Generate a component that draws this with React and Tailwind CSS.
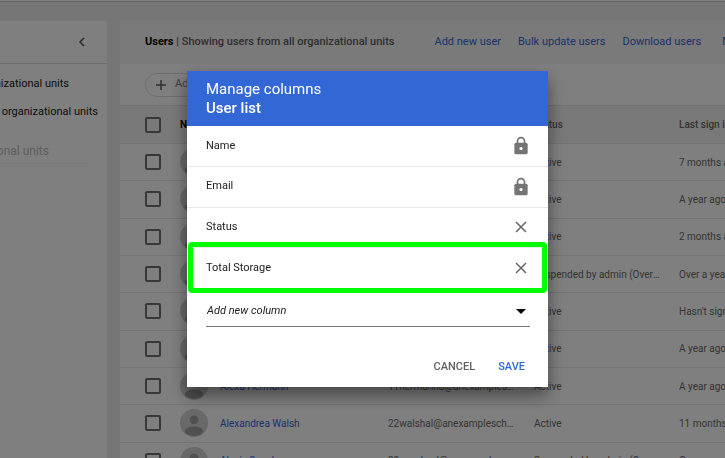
import React from 'react';

const users = [
  { status: 'Active', lastSignIn: '7 months ago' },
  { status: 'Active', lastSignIn: 'A year ago' },
  { status: 'Active', lastSignIn: '2 months ago' },
  { status: 'Suspended by admin (Over quota)', lastSignIn: 'Over a year ago' },
  { status: 'Active', lastSignIn: "Hasn't signed in" },
  { status: 'Active', lastSignIn: 'A year ago' },
  { name: 'Alexa Hermann', email: '11hermanna@anexampleschool.com', status: 'Active', lastSignIn: 'A year ago' },
  { name: 'Alexandrea Walsh', email: '22walshal@anexampleschool.com', status: 'Active', lastSignIn: '11 months ago' },
  { name: 'Alexis Spenks', email: '22spenksal@anexampleschool.com', status: 'Suspended by admin (Over quota)', lastSignIn: 'Over a year ago' },
];

const columns = [
  { label: 'Name', locked: true },
  { label: 'Email', locked: true },
  { label: 'Status' },
  { label: 'Total Storage', highlighted: true },
];

function Avatar() {
  return (
    <svg viewBox="0 0 28 28" className="size-7 shrink-0" aria-hidden="true">
      <circle cx="14" cy="14" r="14" fill="#d2d2d2" />
      <circle cx="14" cy="10.8" r="4.4" fill="#a0a0a0" />
      <ellipse cx="14" cy="22.2" rx="9.2" ry="4.8" fill="#a0a0a0" />
    </svg>
  );
}

function LockIcon() {
  return (
    <svg viewBox="0 0 24 24" className="-mr-px size-5" aria-hidden="true">
      <path d="M7.8 9V6.2a4.2 4.2 0 0 1 8.4 0V9" fill="none" stroke="#757575" strokeWidth="2" />
      <rect x="4" y="8" width="16" height="14" rx="2" fill="#757575" />
      <circle cx="12" cy="15" r="1.9" fill="#fff" />
    </svg>
  );
}

function CloseIcon() {
  return (
    <svg viewBox="0 0 18 18" className="size-[18px]" fill="none" stroke="#666" strokeWidth="1.5" aria-hidden="true">
      <path d="M4 4l10 10M14 4L4 14" />
    </svg>
  );
}

function Checkbox({ label }) {
  return (
    <input
      type="checkbox"
      aria-label={label}
      className="block size-4 appearance-none rounded-xs border-2 border-[#707070]"
    />
  );
}

function Sidebar() {
  return (
    <aside className="w-[107px] shrink-0 overflow-hidden rounded-tr-xs bg-white text-[11px] leading-4 whitespace-nowrap text-[#202020]">
      <div className="flex h-[43px] items-center justify-end border-b border-[#dcdcdc] pr-5">
        <button aria-label="Collapse" className="size-[10px]">
          <svg viewBox="0 0 10 10" className="size-[10px]" fill="none" stroke="#505050" strokeWidth="1.5">
            <path d="M7 1L3 5l4 4" />
          </svg>
        </button>
      </div>
      <ul className="flex flex-col gap-3 pt-3">
        <li className="flex justify-end pr-[38px]">Users from all organizational units</li>
        <li className="flex justify-end pr-[9px]">Users from selected organizational units</li>
      </ul>
      <div className="mt-5 mr-5 flex h-6 items-center justify-end border-b border-[#f0f0f0] pr-[38px] pb-0.5 text-xs text-[#bdbdbd]">
        Search for organizational units
      </div>
    </aside>
  );
}

function UserTable() {
  return (
    <table className="h-[375px] w-[709px] table-fixed border-t border-[#e4e4e4] text-left text-[10px] text-[#6a6a6a]">
      <colgroup>
        <col className="w-[60px]" />
        <col className="w-[208px]" />
        <col className="w-[146px]" />
        <col className="w-[145px]" />
        <col className="w-[150px]" />
      </colgroup>
      <thead>
        <tr className="h-[38px] border-b border-[#e4e4e4] bg-[#f2f2f2]">
          <th className="pl-[25px]"><Checkbox label="Select all users" /></th>
          <th className="font-bold text-black">Name</th>
          <th className="font-medium">Email</th>
          <th className="font-medium">Status</th>
          <th className="font-medium">Last sign in</th>
        </tr>
      </thead>
      <tbody>
        {users.map((user, index) => (
          <tr key={index} className="border-b border-[#e8e8e8]">
            <td className="pl-[25px]"><Checkbox label="Select user" /></td>
            <td>
              <div className="flex items-center gap-3">
                <Avatar />
                {user.name && <a href="#" className="text-[#3367d6]">{user.name}</a>}
              </div>
            </td>
            <td><div className="w-32 truncate">{user.email}</div></td>
            <td><div className="w-32 truncate">{user.status}</div></td>
            <td>{user.lastSignIn}</td>
          </tr>
        ))}
      </tbody>
    </table>
  );
}

function UserPanel() {
  return (
    <main className="min-w-0 flex-1 overflow-hidden bg-white">
      <div className="flex h-[43px] items-center bg-[#f5f5f5] pl-[25px] text-[11px] whitespace-nowrap">
        <h1 className="font-medium text-[#606060]">
          <span className="font-bold text-black">Users</span> | Showing users from all organizational units
        </h1>
        <nav className="ml-10 flex gap-[17px] text-[#3367d6]">
          <a href="#">Add new user</a>
          <a href="#">Bulk update users</a>
          <a href="#">Download users</a>
          <a href="#" className="ml-1">More</a>
        </nav>
      </div>
      <div className="flex h-[41px] items-center pl-[25px]">
        <button className="flex h-6 items-center gap-2 rounded-full border border-[#dcdcdc] px-[9px] text-[11px] text-[#808080]">
          <svg viewBox="0 0 12 12" className="size-3" fill="none" stroke="#606060" strokeWidth="1.5">
            <path d="M6 1v10M1 6h10" />
          </svg>
          Add a filter
        </button>
      </div>
      <UserTable />
    </main>
  );
}

function ManageColumnsDialog() {
  return (
    <div
      role="dialog"
      aria-labelledby="dialog-title"
      className="w-[361px] bg-white text-[#212121] shadow-[0_8px_16px_rgba(0,0,0,0.45)]"
    >
      <h2 id="dialog-title" className="flex h-[55px] flex-col justify-center bg-[#3367d6] px-[19px] text-[15px] leading-[19px] text-white">
        <span>Manage columns</span>
        <span className="font-medium">User list</span>
      </h2>
      <ul className="flex h-[162px] flex-col text-[11px]">
        {columns.map((column) => (
          <li key={column.label} className="relative flex flex-1 items-center justify-between border-b border-[#e8e8e8] pr-[18px] pl-[19px] last:border-0">
            {column.label}
            {column.locked ? (
              <LockIcon />
            ) : (
              <button aria-label={`Remove ${column.label}`}><CloseIcon /></button>
            )}
            {column.highlighted && (
              <div className="pointer-events-none absolute inset-x-px -top-1.5 -bottom-[5px] rounded-sm border-5 border-[#00ff00]" />
            )}
          </li>
        ))}
      </ul>
      <div className="relative mr-[18px] ml-[19px] mt-2">
        <select
          aria-label="Add new column"
          className="block h-[31px] w-full appearance-none border-b border-[#757575] pl-px text-[11px] italic"
        >
          <option>Add new column</option>
        </select>
        <svg viewBox="0 0 10 5" className="pointer-events-none absolute top-[13px] right-1 h-[5px] w-[10px]">
          <path d="M0 0h10L5 5z" />
        </svg>
      </div>
      <div className="flex h-[60px] items-center justify-end gap-[23px] pt-5 pr-[23px] text-[11px] font-medium">
        <button className="text-[#616161]">CANCEL</button>
        <button className="text-[#3367d6]">SAVE</button>
      </div>
    </div>
  );
}

export default function App() {
  return (
    <div className="h-screen overflow-hidden bg-[#ececec] font-[Roboto,sans-serif]">
      <header className="h-0.5 border-b border-[#c8c8c8] bg-white" />
      <div className="flex min-h-full gap-[13px] pt-[19px]">
        <Sidebar />
        <UserPanel />
      </div>
      <div className="fixed inset-0 flex items-center justify-center bg-black/50 pl-[10px]">
        <ManageColumnsDialog />
      </div>
    </div>
  );
}
